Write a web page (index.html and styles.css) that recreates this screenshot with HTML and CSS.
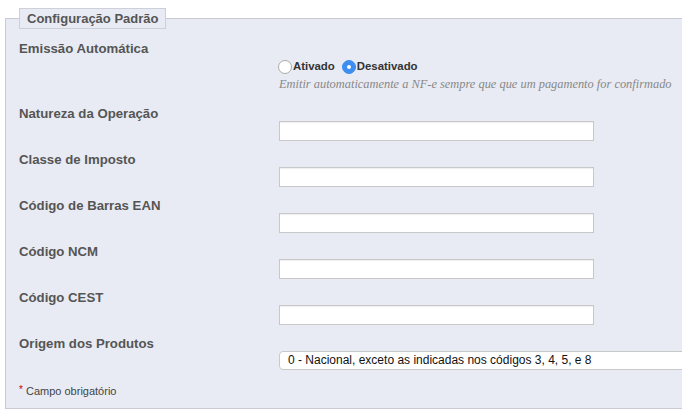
FILE: index.html
```html
<!DOCTYPE html>
<html lang="pt-BR">
<head>
<meta charset="utf-8">
<title>Configuração Padrão</title>
<link rel="stylesheet" href="styles.css">
</head>
<body>
<fieldset class="panel">
  <legend class="panel-title">Configuração Padrão</legend>

  <div class="row row-first">
    <label class="row-label">Emissão Automática</label>
    <div class="row-control control-radios">
      <div class="radios">
        <label class="radio"><input type="radio" name="auto" class="radio-input"><span>Ativado</span></label>
        <label class="radio"><input type="radio" name="auto" class="radio-input" checked><span>Desativado</span></label>
      </div>
      <p class="help">Emitir automaticamente a NF-e sempre que que um pagamento for confirmado</p>
    </div>
  </div>

  <div class="row">
    <label class="row-label">Natureza da Operação</label>
    <div class="row-control"><input type="text" class="text-input"></div>
  </div>
  <div class="row">
    <label class="row-label">Classe de Imposto</label>
    <div class="row-control"><input type="text" class="text-input"></div>
  </div>
  <div class="row">
    <label class="row-label">Código de Barras EAN</label>
    <div class="row-control"><input type="text" class="text-input"></div>
  </div>
  <div class="row">
    <label class="row-label">Código NCM</label>
    <div class="row-control"><input type="text" class="text-input"></div>
  </div>
  <div class="row">
    <label class="row-label">Código CEST</label>
    <div class="row-control"><input type="text" class="text-input"></div>
  </div>
  <div class="row">
    <label class="row-label">Origem dos Produtos</label>
    <div class="row-control control-clip">
      <div class="select">0 - Nacional, exceto as indicadas nos códigos 3, 4, 5, e 8</div>
    </div>
  </div>

  <p class="required"><span class="star">*</span> Campo obrigatório</p>
</fieldset>
</body>
</html>
```

FILE: styles.css
```css
html, body {
  margin: 0;
  padding: 0;
  background: #ffffff;
  overflow: hidden;
}

body {
  width: 682px;
  height: 416px;
  font-family: "Liberation Sans", Arial, sans-serif;
  color: #555;
}

.panel {
  box-sizing: border-box;
  margin: 8px 0 0 5px;
  padding: 0 0 0 13px;
  border: 1px solid #c9cbd3;
  border-right: 0;
  background: #e8ebf3;
  height: 401px;
  min-width: 0;
  overflow: hidden;
}

.panel-title {
  box-sizing: border-box;
  height: 21px;
  padding: 0 7px;
  margin: 0;
  border: 1px solid #cdd0d8;
  background: #e8ebf3;
  font-size: 13px;
  font-weight: bold;
  line-height: 19px;
  color: #555;
}

.row {
  display: flex;
  height: 46px;
}

.row-first {
  margin-top: 12px;
  height: 65px;
}

.row-label {
  width: 260px;
  flex: none;
  font-size: 13.2px;
  font-weight: bold;
  line-height: 16px;
  color: #555;
}

.row-control {
  padding-top: 15px;
  flex: 1;
  min-width: 0;
}

.control-clip {
  overflow: hidden;
}

.control-radios {
  padding-top: 17px;
}

.radios {
  display: flex;
  gap: 8px;
  height: 15px;
  align-items: center;
}

.radio {
  display: flex;
  align-items: center;
  font-size: 11.4px;
  font-weight: bold;
  color: #333;
}

.radio-input {
  appearance: none;
  -webkit-appearance: none;
  box-sizing: border-box;
  width: 14px;
  height: 14px;
  margin: 2px 1px 0 -1px;
  border-radius: 50%;
  border: 1px solid #aaa;
  background: #fff;
  display: grid;
  place-items: center;
}

.radio-input:checked {
  border-color: #3d8ef0;
  background: #3d8ef0;
}

.radio-input:checked::after {
  content: "";
  width: 4px;
  height: 4px;
  border-radius: 50%;
  background: #fff;
}

.help {
  margin: 4px 0 0;
  font-family: "Liberation Serif", Georgia, serif;
  font-style: italic;
  font-size: 12.4px;
  line-height: 14px;
  color: #888;
  white-space: nowrap;
}

.text-input {
  display: block;
  box-sizing: border-box;
  width: 315px;
  height: 20px;
  margin: 0;
  padding: 0 4px;
  border: 1px solid #c8c8c8;
  box-shadow: inset 0 1px 1px #eeeeee;
  background: #fff;
  outline: none;
}

.select {
  box-sizing: border-box;
  width: 440px;
  height: 19px;
  padding: 0 8px;
  border: 1px solid #c9c9c9;
  border-radius: 4px;
  background: #fff;
  font-size: 12px;
  line-height: 17px;
  color: #111;
  white-space: nowrap;
}

.required {
  margin: 1px 0 0;
  font-size: 11px;
  line-height: 14px;
  color: #444;
}

.star {
  color: #cc0000;
  font-size: 10px;
  vertical-align: 2px;
}
```
